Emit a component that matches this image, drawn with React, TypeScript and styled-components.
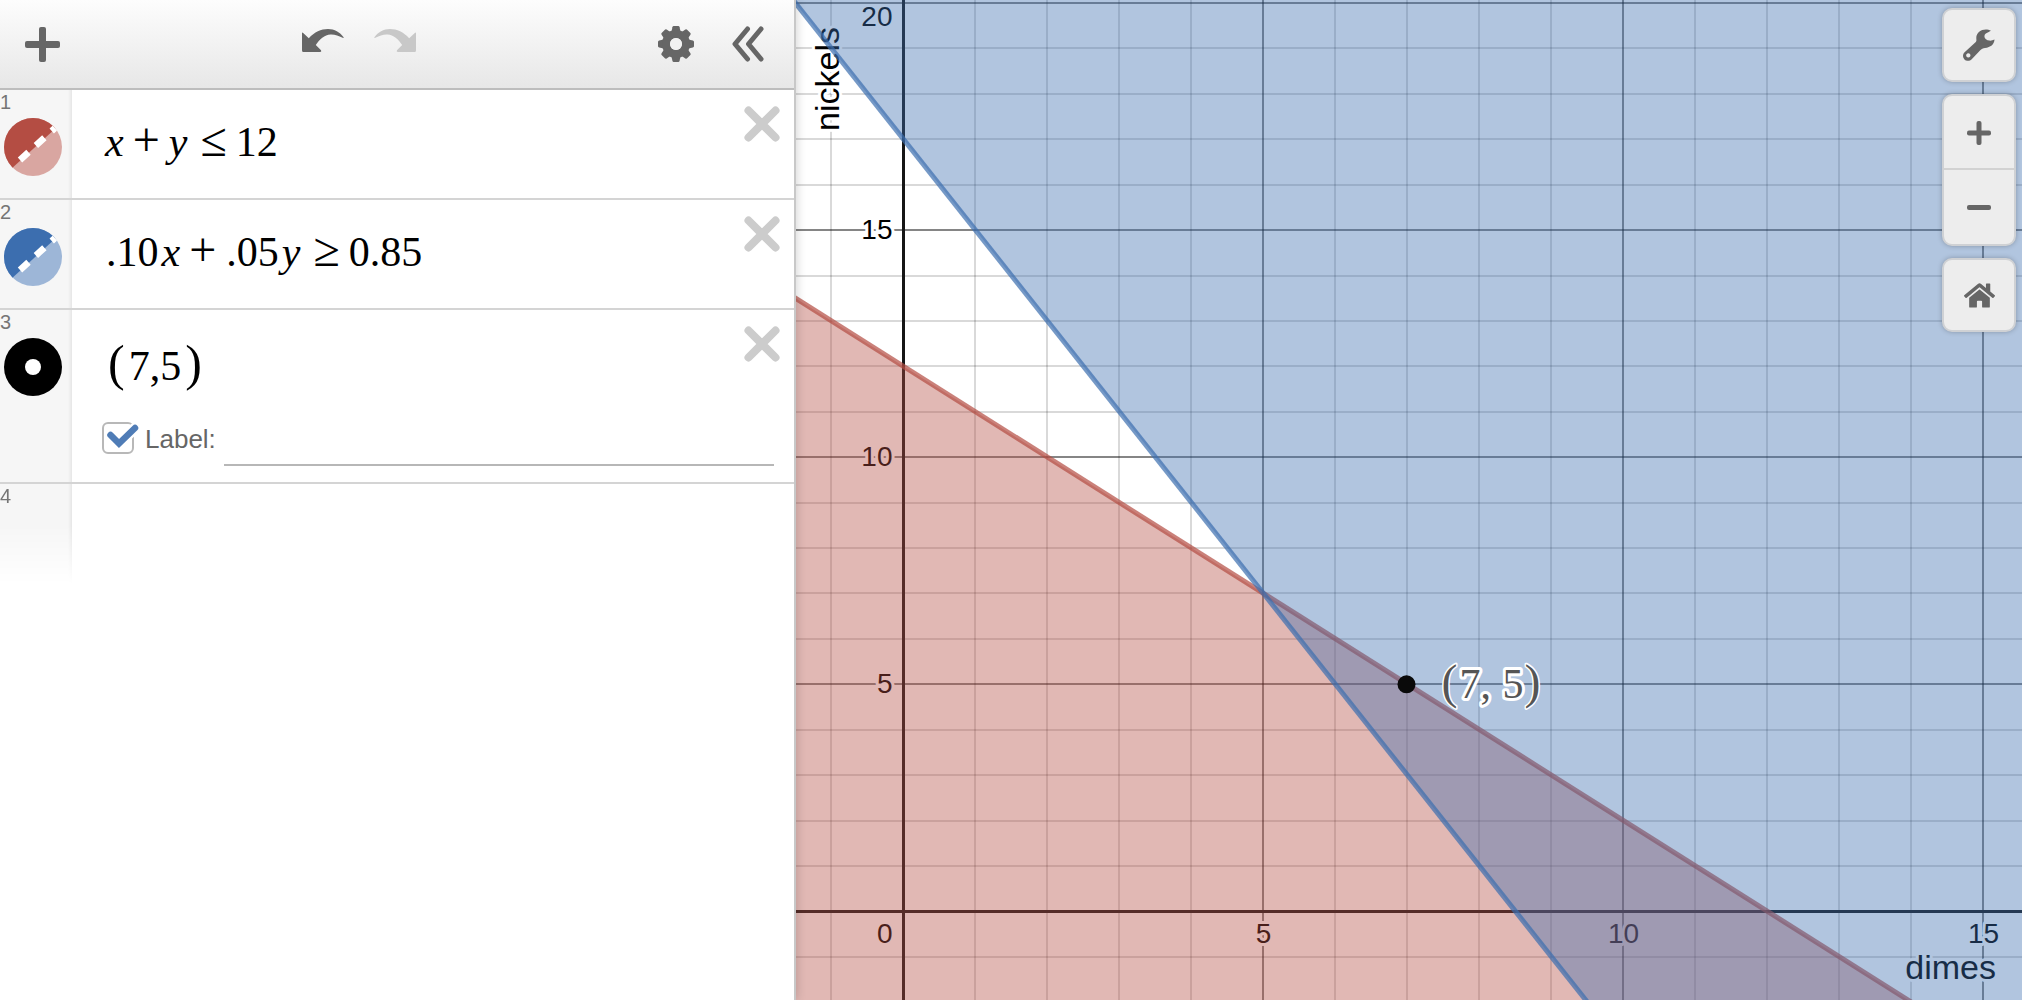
import React, { useLayoutEffect, useRef, useState } from "react";
import styled, { createGlobalStyle } from "styled-components";
import { FaHome } from "react-icons/fa";

const SANS = '"Liberation Sans", Arial, sans-serif';
const MATH = '"Liberation Serif", "Times New Roman", serif';

const RED = "rgb(180, 77, 67)";
const BLUE = "rgb(60, 110, 175)";
const INK = "#666";

const GlobalStyle = createGlobalStyle`
  *, *::before, *::after { box-sizing: border-box; }
  html, body, #root { height: 100%; margin: 0; }
  body { background: #fff; font-family: ${SANS}; overflow: hidden; }
  button { font: inherit; }
`;

const Shell = styled.div`
  display: flex;
  height: 100%;
`;

const Panel = styled.aside`
  position: relative;
  z-index: 1;
  display: flex;
  flex-direction: column;
  flex: 0 0 796px;
  max-width: 60%;
  background: #fff;
  border-right: 2px solid #c8c8c8;
  box-shadow: 0 0 10px rgba(0, 0, 0, 0.2);
`;

const Toolbar = styled.header`
  display: flex;
  align-items: center;
  justify-content: space-between;
  height: 90px;
  padding: 0 30px 0 25px;
  background: linear-gradient(#fdfdfd, #e7e7e7);
  border-bottom: 2px solid #bdbdbd;
`;

const ToolGroup = styled.div<{ $gap: number }>`
  display: flex;
  align-items: center;
  gap: ${(p) => p.$gap}px;
`;

const IconButton = styled.button<{ $tone?: string }>`
  display: flex;
  padding: 0;
  border: 0;
  background: none;
  color: ${(p) => p.$tone ?? INK};
  cursor: pointer;
`;

const List = styled.ol`
  margin: 0;
  padding: 0;
  list-style: none;
`;

const Row = styled.li`
  display: flex;
  border-bottom: 2px solid #d4d4d4;
`;

const DraftRow = styled.li`
  display: flex;
  height: 104px;
`;

const Gutter = styled.div<{ $fade?: boolean }>`
  display: flex;
  flex-direction: column;
  flex: 0 0 72px;
  gap: 6px;
  padding: 2px 0 0 0;
  background: linear-gradient(to right, #f6f6f6 68px, #e6e6e6);
  ${(p) => p.$fade && "mask-image: linear-gradient(#000 40%, transparent 96%);"}
`;

const RowNumber = styled.span`
  font-size: 20px;
  line-height: 20px;
  color: #757575;
`;

const StyleButton = styled(IconButton)`
  margin-left: 4px;
`;

const Body = styled.div`
  flex: 1;
  min-width: 0;
  padding: 30px 0 30px 32px;
`;

const PointBody = styled(Body)`
  padding: 33px 0 16px 30px;
`;

const Formula = styled.div`
  display: flex;
  align-items: baseline;
  height: 48px;
  font-family: ${MATH};
  font-size: 42px;
  line-height: 40px;
  white-space: pre;
`;

const PointFormula = styled(Formula)`
  padding-left: 4px;
`;

const Digits = styled.span`
  padding: 0 2px;
`;

const Variable = styled.var`
  font-style: italic;
  padding: 0 1px;
`;

const Operator = styled.span`
  font-size: 48px;
  padding: 0 8px;
`;

const Relation = styled(Operator)`
  padding: 0 7px 0 12px;
`;

const Paren = styled.span`
  font-size: 50px;
  padding: 0 2px;
`;

const DeleteButton = styled(IconButton)`
  align-self: flex-start;
  margin: 16px 14px 0 0;
`;

const LabelRow = styled.div`
  display: flex;
  align-items: flex-start;
  height: 44px;
  margin: 31px -30px 0 0;
`;

const CheckField = styled.label`
  display: flex;
  align-items: center;
  gap: 11px;
  height: 34px;
  font-size: 26px;
  line-height: 32px;
  color: ${INK};
`;

const CheckWrap = styled.span`
  position: relative;
  display: flex;
  width: 32px;
  height: 34px;
`;

const CheckInput = styled.input`
  appearance: none;
  width: 32px;
  height: 32px;
  margin: 0;
  border: 2px solid #b8b8b8;
  border-radius: 6px;
  background: #fff;
`;

const CheckMark = styled.svg`
  position: absolute;
  left: 0;
  top: 0;
  overflow: visible;
  pointer-events: none;
`;

const LabelInput = styled.input`
  flex: 1;
  min-width: 0;
  height: 44px;
  margin-left: 8px;
  padding: 0 4px;
  border: 0;
  border-bottom: 2px solid #b7b7b7;
  outline: 0;
  background: none;
  font-size: 26px;
`;

const GraphPane = styled.main`
  position: relative;
  flex: 1;
  min-width: 0;
  overflow: hidden;
`;

const Plot = styled.svg`
  display: block;
  width: 100%;
  height: 100%;
`;

const TickText = styled.text`
  font: 28px ${SANS};
  fill: #000;
  stroke: #fff;
  stroke-width: 6px;
  stroke-linejoin: round;
  paint-order: stroke;
`;

const AxisName = styled(TickText)`
  font-size: 34px;
`;

const PointLabel = styled.text`
  font: 42px ${MATH};
  fill: #555;
  stroke: #fff;
  stroke-width: 6px;
  stroke-linejoin: round;
  paint-order: stroke;
  white-space: pre;
`;

const BigParen = styled.tspan`
  font-size: 48px;
  stroke-width: 3px;
`;

const Controls = styled.nav`
  position: absolute;
  top: 8px;
  right: 6px;
  display: flex;
  flex-direction: column;
  gap: 12px;
`;

const ControlCard = styled.div`
  display: flex;
  flex-direction: column;
  width: 74px;
  border: 2px solid #cfd1d4;
  border-radius: 10px;
  background: #ededed;
  box-shadow: 0 0 5px rgba(0, 0, 0, 0.25);
`;

const ControlButton = styled(IconButton)`
  align-items: center;
  justify-content: center;
  height: 70px;
  & + & {
    height: 76px;
    border-top: 2px solid #d2d2d2;
  }
`;

const ZoomCard = styled(ControlCard)`
  ${ControlButton}:first-child {
    height: 72px;
    padding-top: 2px;
  }
`;

function PlusIcon({ size, bar }: { size: number; bar: number }) {
  const start = (size - bar) / 2;
  return (
    <svg width={size} height={size} fill="currentColor" aria-hidden="true">
      <rect x={start} width={bar} height={size} rx="2" />
      <rect y={start} width={size} height={bar} rx="2" />
    </svg>
  );
}

function MinusIcon() {
  return (
    <svg width="24" height="24" fill="currentColor" aria-hidden="true">
      <rect y="10" width="24" height="5" rx="2" />
    </svg>
  );
}

function ArrowIcon({ flip }: { flip?: boolean }) {
  return (
    <svg width="42" height="30" viewBox="0 0 42 30" fill="currentColor" aria-hidden="true">
      <g transform={flip ? "matrix(-1 0 0 1 42 0)" : undefined}>
        <path d="M0 4.5 Q0 3 1.200 4 L6.800 9.300 C12.500 3 19 0 26 0 C32.500 0 38 3.200 41.600 8.200 Q42 9.300 40.600 8.800 C36.500 6.800 33 5.400 28.500 5.600 C22.500 6 17.500 10.500 13.800 16 L18.800 21 Q20 22.900 18 22.900 L1.500 22.900 Q0 22.900 0 21.400 Z" />
      </g>
    </svg>
  );
}

function GearIcon() {
  const teeth = Array.from({ length: 8 }, (_, i) => i * 45);
  return (
    <svg width="36" height="36" viewBox="-18 -18 36 36" aria-hidden="true">
      <g fill="currentColor">
        {teeth.map((angle) => (
          <path
            key={angle}
            transform={`rotate(${angle})`}
            d="M-5 -10 L-3.600 -16.800 Q-3.300 -18 -2.300 -18 L2.300 -18 Q3.300 -18 3.600 -16.800 L5 -10 Z"
          />
        ))}
      </g>
      <circle r="10" fill="none" stroke="currentColor" strokeWidth="8" />
      <circle r="6" fill="#f2f2f2" />
    </svg>
  );
}

function CollapseIcon() {
  return (
    <svg
      width="32"
      height="36"
      fill="none"
      stroke="currentColor"
      strokeWidth="5"
      strokeLinecap="round"
      strokeLinejoin="round"
      aria-hidden="true"
    >
      <path d="M15.500 3 L3 18 L15.500 33 M29 3 L16.500 18 L29 33" />
    </svg>
  );
}

function WrenchIcon() {
  return (
    <svg width="32" height="34" viewBox="0 0 32 34" aria-hidden="true">
      <path
        fill="currentColor"
        fillRule="evenodd"
        d="M28 2.800 C22 -.8 13.300 2.800 13.300 9.800 C13.300 12 13.800 12.900 12.800 13.900 L1.600 24.200 C-.6 26.300 -.4 29.500 1.500 31.400 C3.500 33.400 6.700 33.300 8.700 31.200 L17 22.400 C18.500 20.900 20 20.300 22 20 C27.500 19.600 31.300 16.500 31.500 11.600 Q29 12.800 26.500 12.600 C23.500 12.200 21 10.400 21.500 7.800 C22 5.200 25 4.500 28 2.800 Z M5.300 25.300 a2.100 2.100 0 1 0 .01 0 Z"
      />
    </svg>
  );
}

function CrossIcon() {
  return (
    <svg width="36" height="36" stroke="currentColor" strokeWidth="8" strokeLinecap="round" aria-hidden="true">
      <path d="M4.500 4.500 L31.500 31.500 M31.500 4.500 L4.500 31.500" />
    </svg>
  );
}

function InequalityIcon({ color, id }: { color: string; id: string }) {
  return (
    <svg width="58" height="58" viewBox="0 0 58 58" aria-hidden="true">
      <clipPath id={id}>
        <circle cx="29" cy="29" r="29" />
      </clipPath>
      <g clipPath={`url(#${id})`}>
        <rect width="58" height="58" fill="#fff" />
        <rect width="58" height="58" fill={color} opacity="0.5" />
        <path d="M0 57.500 L0 0 L58 0 L58 4.500 Z" fill={color} />
        <path
          d="M16 42 L60 1.800"
          stroke="#fff"
          strokeWidth="6.500"
          strokeDasharray="11.500 10"
        />
      </g>
    </svg>
  );
}

function PointIcon() {
  return (
    <svg width="58" height="58" aria-hidden="true">
      <circle cx="29" cy="29" r="29" fill="#000" />
      <circle cx="29" cy="29" r="8" fill="#fff" />
    </svg>
  );
}

const UNIT_X = 72;
const UNIT_Y = 45.42;
const ORIGIN_LEFT = 107.5;
const ORIGIN_BOTTOM = 88.6;

function range(from: number, to: number) {
  const out: number[] = [];
  for (let n = Math.ceil(from); n <= to; n += 1) out.push(n);
  return out;
}

function Graph() {
  const pane = useRef<HTMLElement>(null);
  const [size, setSize] = useState({ w: 1226, h: 1000 });

  useLayoutEffect(() => {
    const el = pane.current;
    if (!el) return;
    const measure = () => setSize({ w: el.clientWidth, h: el.clientHeight });
    measure();
    const observer = new ResizeObserver(measure);
    observer.observe(el);
    return () => observer.disconnect();
  }, []);

  const { w, h } = size;
  const originY = h - ORIGIN_BOTTOM;
  const px = (x: number) => ORIGIN_LEFT + x * UNIT_X;
  const py = (y: number) => originY - y * UNIT_Y;
  const xMin = -ORIGIN_LEFT / UNIT_X;
  const xMax = (w - ORIGIN_LEFT) / UNIT_X;
  const xs = range(xMin, xMax).filter((n) => n !== 0);
  const ys = range(-ORIGIN_BOTTOM / UNIT_Y, originY / UNIT_Y).filter((n) => n !== 0);
  const lineColor = (n: number) => (n % 5 === 0 ? "rgba(0,0,0,.48)" : "rgba(0,0,0,.15)");

  const lo = xMin - 1;
  const hi = xMax + 1;
  const coins = (x: number) => 12 - x;
  const value = (x: number) => 17 - 2 * x;
  const segment = (f: (x: number) => number) =>
    `M${px(lo)} ${py(f(lo))} L${px(hi)} ${py(f(hi))}`;
  const far = 4000;

  return (
    <GraphPane ref={pane}>
      <Plot role="img" aria-label="Graph of dimes and nickels">
        <g strokeWidth="2">
          {xs.map((n) => (
            <path key={`x${n}`} d={`M${Math.floor(px(n))} 0 V${h}`} stroke={lineColor(n)} />
          ))}
          {ys.map((n) => (
            <path key={`y${n}`} d={`M0 ${Math.round(py(n))} H${w}`} stroke={lineColor(n)} />
          ))}
        </g>
        <g stroke="#161616" strokeWidth="3">
          <path d={`M${px(0)} 0 V${h}`} />
          <path d={`M0 ${Math.floor(originY) + 0.5} H${w}`} />
        </g>
        {ys
          .filter((n) => n % 5 === 0)
          .map((n) => (
            <TickText key={n} x={px(0) - 11} y={Math.max(26, Math.round(py(n)) + 9)} textAnchor="end">
              {n}
            </TickText>
          ))}
        <TickText x={px(0) - 11} y={originY + 32} textAnchor="end">
          0
        </TickText>
        {xs
          .filter((n) => n % 5 === 0)
          .map((n) => (
            <TickText key={n} x={px(n)} y={originY + 32} textAnchor="middle">
              {n}
            </TickText>
          ))}
        <AxisName transform="translate(43 27) rotate(-90)" textAnchor="end">
          nickels
        </AxisName>
        <AxisName x={w - 26} y={h - 21} textAnchor="end">
          dimes
        </AxisName>

        <path d={`${segment(coins)} V${far} H${-far} V${py(coins(lo))} Z`} fill={RED} opacity="0.4" />
        <path d={segment(coins)} stroke={RED} strokeWidth="5" opacity="0.7" />
        <path d={`${segment(value)} H${far} V${-far} H${px(lo)} Z`} fill={BLUE} opacity="0.4" />
        <path d={segment(value)} stroke={BLUE} strokeWidth="5" opacity="0.7" />

        <circle cx={px(7) - 1} cy={py(5)} r="9" fill="#0a0a0a" />
        <PointLabel x={px(7) + 34} y={py(5) + 14}>
          <BigParen>(</BigParen>
          <tspan dx="2">7, </tspan>
          <tspan dx="1">5</tspan>
          <BigParen dx="1">)</BigParen>
        </PointLabel>
      </Plot>

      <Controls aria-label="Graph controls">
        <ControlCard>
          <ControlButton aria-label="Graph settings">
            <WrenchIcon />
          </ControlButton>
        </ControlCard>
        <ZoomCard>
          <ControlButton aria-label="Zoom in">
            <PlusIcon size={24} bar={5} />
          </ControlButton>
          <ControlButton aria-label="Zoom out">
            <MinusIcon />
          </ControlButton>
        </ZoomCard>
        <ControlCard>
          <ControlButton aria-label="Default viewport">
            <FaHome size={31} />
          </ControlButton>
        </ControlCard>
      </Controls>
    </GraphPane>
  );
}

function DeleteExpression() {
  return (
    <DeleteButton $tone="#ccc" aria-label="Delete expression">
      <CrossIcon />
    </DeleteButton>
  );
}

export default function App() {
  const [showLabel, setShowLabel] = useState(true);
  const [label, setLabel] = useState("");

  return (
    <>
      <GlobalStyle />
      <Shell>
        <Panel>
          <Toolbar>
            <ToolGroup $gap={242}>
              <IconButton aria-label="Add item">
                <PlusIcon size={35} bar={7} />
              </IconButton>
              <ToolGroup $gap={30}>
                <IconButton aria-label="Undo">
                  <ArrowIcon />
                </IconButton>
                <IconButton $tone="#c8c8c8" aria-label="Redo">
                  <ArrowIcon flip />
                </IconButton>
              </ToolGroup>
            </ToolGroup>
            <ToolGroup $gap={38}>
              <IconButton aria-label="Edit list">
                <GearIcon />
              </IconButton>
              <IconButton aria-label="Hide list">
                <CollapseIcon />
              </IconButton>
            </ToolGroup>
          </Toolbar>

          <List>
            <Row>
              <Gutter>
                <RowNumber>1</RowNumber>
                <StyleButton aria-label="Hide expression 1">
                  <InequalityIcon color={RED} id="clip-red" />
                </StyleButton>
              </Gutter>
              <Body>
                <Formula>
                  <Variable>x</Variable>
                  <Operator>+</Operator>
                  <Variable>y</Variable>
                  <Relation>≤</Relation>
                  <Digits>12</Digits>
                </Formula>
              </Body>
              <DeleteExpression />
            </Row>
            <Row>
              <Gutter>
                <RowNumber>2</RowNumber>
                <StyleButton aria-label="Hide expression 2">
                  <InequalityIcon color={BLUE} id="clip-blue" />
                </StyleButton>
              </Gutter>
              <Body>
                <Formula>
                  <Digits>.10</Digits>
                  <Variable>x</Variable>
                  <Operator>+</Operator>
                  <Digits>.05</Digits>
                  <Variable>y</Variable>
                  <Relation>≥</Relation>
                  <Digits>0.85</Digits>
                </Formula>
              </Body>
              <DeleteExpression />
            </Row>
            <Row>
              <Gutter>
                <RowNumber>3</RowNumber>
                <StyleButton aria-label="Hide expression 3">
                  <PointIcon />
                </StyleButton>
              </Gutter>
              <PointBody>
                <PointFormula>
                  <Paren>(</Paren>
                  <Digits>7,5</Digits>
                  <Paren>)</Paren>
                </PointFormula>
                <LabelRow>
                  <CheckField htmlFor="show-label">
                    <CheckWrap>
                      <CheckInput
                        id="show-label"
                        type="checkbox"
                        checked={showLabel}
                        onChange={(e) => setShowLabel(e.target.checked)}
                      />
                      {showLabel && (
                        <CheckMark width="36" height="32" fill="none" strokeLinecap="round" aria-hidden="true">
                          <path d="M8.500 13 L17 21.500 L33 6" stroke="#fff" strokeWidth="11" />
                          <path d="M8.500 13 L17 21.500 L33 6" stroke="#4f7cb6" strokeWidth="6.500" />
                        </CheckMark>
                      )}
                    </CheckWrap>
                    Label:
                  </CheckField>
                  <LabelInput
                    aria-label="Label text"
                    value={label}
                    onChange={(e) => setLabel(e.target.value)}
                  />
                </LabelRow>
              </PointBody>
              <DeleteExpression />
            </Row>
            <DraftRow>
              <Gutter $fade>
                <RowNumber>4</RowNumber>
              </Gutter>
            </DraftRow>
          </List>
        </Panel>
        <Graph />
      </Shell>
    </>
  );
}
